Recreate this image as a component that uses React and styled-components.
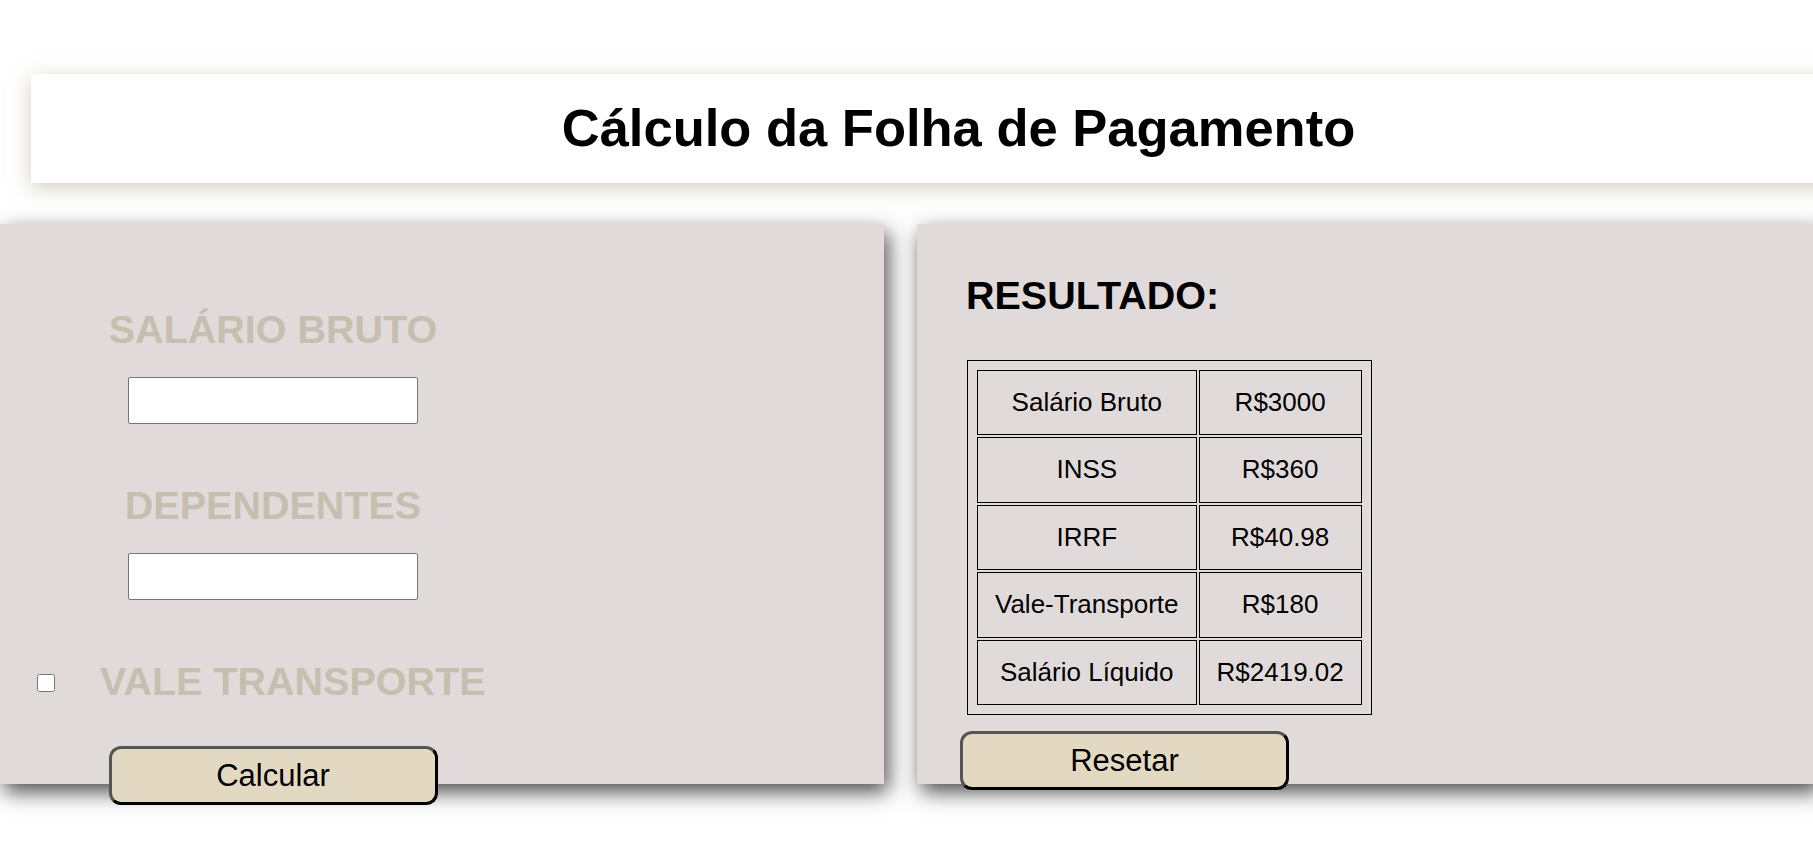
import styled, { createGlobalStyle } from "styled-components";

const rows = [
  ["Salário Bruto", "R$3000"],
  ["INSS", "R$360"],
  ["IRRF", "R$40.98"],
  ["Vale-Transporte", "R$180"],
  ["Salário Líquido", "R$2419.02"],
];

function App() {
  return (
    <>
      <GlobalStyle />
      <Page>
        <Header>
          <Title>Cálculo da Folha de Pagamento</Title>
        </Header>
        <PanelsRow>
          <FormPanel>
            <FieldColumn>
              <FieldLabel>SALÁRIO BRUTO</FieldLabel>
              <TextInput type="text" />
              <FieldLabel $top={58}>DEPENDENTES</FieldLabel>
              <TextInput type="text" />
            </FieldColumn>
            <CheckRow>
              <CheckBox type="checkbox" />
              <FieldLabel $top={0}>VALE TRANSPORTE</FieldLabel>
            </CheckRow>
            <FieldColumn>
              <ActionButton $top={42}>Calcular</ActionButton>
            </FieldColumn>
          </FormPanel>
          <ResultPanel>
            <ResultTitle>RESULTADO:</ResultTitle>
            <ResultTable>
              <tbody>
                {rows.map(([label, value]) => (
                  <tr key={label}>
                    <Cell>{label}</Cell>
                    <Cell>{value}</Cell>
                  </tr>
                ))}
              </tbody>
            </ResultTable>
            <ActionButton $top={16} $left={43}>
              Resetar
            </ActionButton>
          </ResultPanel>
        </PanelsRow>
      </Page>
    </>
  );
}

const GlobalStyle = createGlobalStyle`
  html, body {
    margin: 0;
    padding: 0;
    background: #ffffff;
    overflow: hidden;
  }
  body {
    font-family: "Liberation Sans", Arial, sans-serif;
  }
`;

const Page = styled.div`
  width: 1813px;
  height: 856px;
  padding-top: 74px;
  box-sizing: border-box;
`;

const Header = styled.header`
  margin-left: 31px;
  width: 1855px;
  height: 109px;
  background-color: #ffffff;
  box-shadow: 0 5px 20px rgba(180, 175, 150, 0.6);
  display: flex;
  justify-content: center;
  align-items: center;
`;

const Title = styled.h1`
  margin: 0;
  margin-top: -2px;
  font-size: 52.5px;
  font-weight: bold;
  color: #000;
`;

const PanelsRow = styled.div`
  margin-top: 41px;
  display: flex;
  gap: 33px;
  align-items: flex-start;
`;

const Panel = styled.section`
  flex: none;
  height: 560px;
  box-sizing: border-box;
  background-color: #e1dadb;
  box-shadow: 4px 8px 20px rgba(0, 0, 0, 0.7);
  display: flex;
  flex-direction: column;
`;

const FormPanel = styled(Panel)`
  width: 884px;
  padding-top: 82px;
`;

const ResultPanel = styled(Panel)`
  width: 900px;
  padding-top: 49px;
  align-items: flex-start;
`;

const FieldColumn = styled.div`
  width: 546px;
  display: flex;
  flex-direction: column;
  align-items: center;
`;

const FieldLabel = styled.h2`
  margin: 0;
  margin-top: ${(p) => (p.$top ?? 0)}px;
  font-size: 39.5px;
  line-height: 46px;
  font-weight: bold;
  color: #c4bfae;
`;

const TextInput = styled.input`
  margin-top: 25px;
  width: 290px;
  height: 47px;
  box-sizing: border-box;
  border: 1px solid #767676;
  border-radius: 2px;
  background: #ffffff;
  font-family: "Liberation Sans", Arial, sans-serif;
  font-size: 16px;
`;

const CheckRow = styled.div`
  margin-top: 58px;
  padding-left: 37px;
  display: flex;
  align-items: center;
  gap: 45px;
`;

const CheckBox = styled.input`
  margin: 4px 0 0 0;
  width: 18px;
  height: 18px;
`;

const ActionButton = styled.button`
  margin-top: ${(p) => p.$top}px;
  margin-left: ${(p) => p.$left ?? 0}px;
  flex: none;
  width: 329px;
  height: 59px;
  box-sizing: border-box;
  border: 3px solid #000;
  border-top-color: #555;
  border-left-color: #555;
  border-radius: 12px;
  background-color: #e3d9c2;
  font-family: "Liberation Sans", Arial, sans-serif;
  font-size: 31px;
  color: #000;
  cursor: pointer;
`;

const ResultTitle = styled.h2`
  margin: 0 0 0 49px;
  font-size: 39.5px;
  font-weight: bold;
  color: #000;
`;

const ResultTable = styled.table`
  margin: 42px 0 0 50px;
  border: 1px solid #000;
  border-spacing: 2px;
  padding: 7px;
`;

const Cell = styled.td`
  border: 1px solid #000;
  padding: 16px 17px;
  font-size: 26px;
  line-height: 31.4px;
  text-align: center;
  color: #000;
`;

export default App;
